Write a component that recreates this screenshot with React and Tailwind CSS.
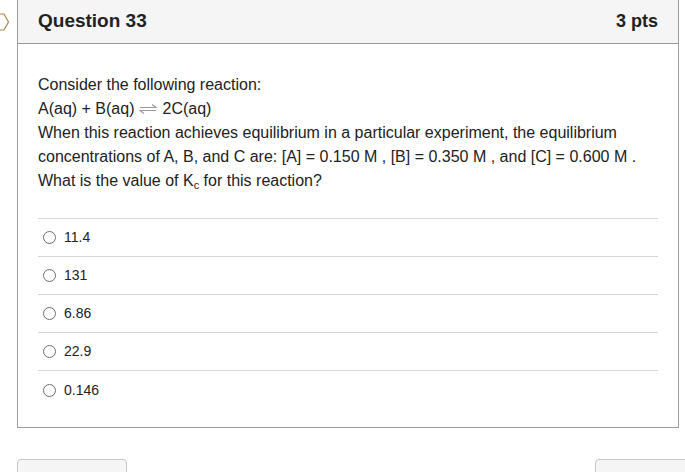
import React from 'react';

const answers = ['11.4', '131', '6.86', '22.9', '0.146'];

function EqArrow() {
  return (
    <svg width="18" height="10" viewBox="0 0 18 10" className="mx-[5px] inline-block align-middle" fill="none" stroke="#9a9a9a" strokeWidth="1.1">
      <path d="M1 3.5 H17 L13 0.5" />
      <path d="M17 6.5 H1 L5 9.5" />
    </svg>
  );
}

export default function App() {
  return (
    <div
      className="relative h-[472px] w-[685px] overflow-hidden bg-white text-[#222]"
      style={{ fontFamily: '"Liberation Sans", Arial, sans-serif' }}
    >
      {/* flag marker, cut by the window edge */}
      <svg className="absolute left-0 top-[13px]" width="10" height="18" viewBox="0 0 10 18" fill="none">
        <path d="M-2 1 H4 L8.5 9 L4 17 H-2" stroke="#a8884c" strokeWidth="1.2" />
      </svg>

      <div className="ml-[17px] w-[662px] border border-t-0 border-[#9b9b9b]">
        <div className="flex h-[44px] items-center justify-between border-b border-[#9b9b9b] bg-[#f5f5f5] px-5">
          <h2 className="text-[19px] font-bold">Question 33</h2>
          <span className="text-[18px] font-bold">3 pts</span>
        </div>

        <div className="px-5 pb-[18px] pt-[29px]">
          <div className="text-[16px] leading-[24px]">
            <p>Consider the following reaction:</p>
            <p className="flex items-center">
              A(aq) + B(aq)
              <EqArrow />
              2C(aq)
            </p>
            <p>
              When this reaction achieves equilibrium in a particular experiment, the equilibrium concentrations of A, B,
              and C are: [A] = 0.150 M , [B] = 0.350 M , and [C] = 0.600 M .
            </p>
            <p>
              What is the value of K<sub className="text-[11px] leading-none">c</sub> for this reaction?
            </p>
          </div>

          <div className="mt-[25px] border-b border-[#d6d6d6]" />
          <ul>
            {answers.map((a, i) => (
              <li
                key={a}
                className={`flex h-[38px] items-center gap-2 pl-[5px] text-[14px] ${
                  i < answers.length - 1 ? 'border-b border-[#d6d6d6]' : ''
                }`}
              >
                <span className="h-[13px] w-[13px] rounded-full border border-[#6e6e6e] bg-white" />
                <span>{a}</span>
              </li>
            ))}
          </ul>
        </div>
      </div>

      <div className="mt-[31px] flex justify-between pl-[17px]">
        <button className="h-[30px] w-[110px] rounded-[4px] border border-[#c8c8c8] bg-[#f5f5f5]" />
        <button className="h-[30px] w-[110px] translate-x-[20px] rounded-[4px] border border-[#c8c8c8] bg-[#f5f5f5]" />
      </div>
    </div>
  );
}
